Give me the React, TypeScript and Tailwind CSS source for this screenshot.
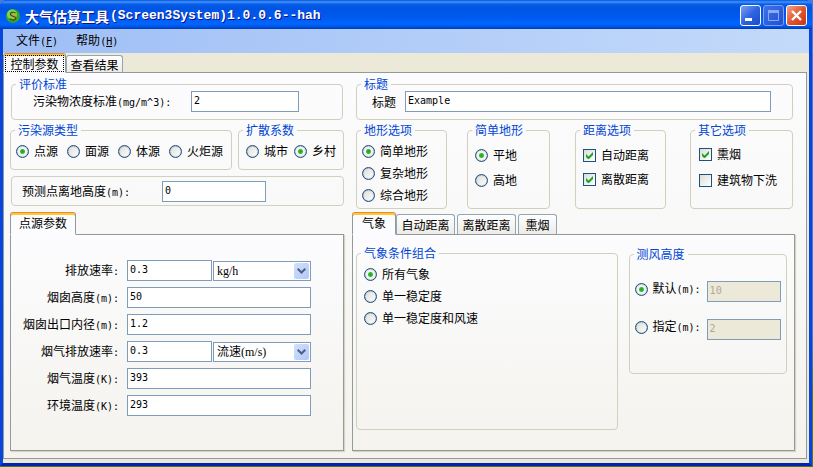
import React from 'react';
import clsx from 'clsx';

const LATIN = "font-['DejaVu_Sans_Mono','Noto_Sans_CJK_SC',monospace] text-[10px]";
const INPUT = clsx(
    LATIN,
    'block h-[21px] min-w-0 border border-[#7f9db9] bg-white px-0.5 pb-0.5 text-black outline-none disabled:bg-[#ece9d8] disabled:text-[#aca899]'
);

// Chinese at 12px, Latin runs at the half-width size
function Text({ children }: { children: string }) {
    return (
        <span className="whitespace-nowrap">
            {children.split(/([\x20-\x7e]+)/).map((part, i) =>
                i % 2 ? <span key={i} className={LATIN}>{part}</span> : part
            )}
        </span>
    );
}

function Group({ title, className, children }: { title: string; className?: string; children: React.ReactNode }) {
    return (
        <fieldset className={clsx('min-w-0 rounded-[4px] border border-[#d0d0bf]', className)}>
            <legend className="ml-1 px-[3px] leading-3 text-[#0046d5]">{title}</legend>
            {children}
        </fieldset>
    );
}

function Radio({ name, label, checked }: { name: string; label: string; checked?: boolean }) {
    return (
        <label className="flex h-4 items-center gap-[5px]">
            <input
                type="radio"
                name={name}
                defaultChecked={checked}
                className="size-[13px] shrink-0 appearance-none rounded-full border border-[#21507d] bg-linear-to-br from-[#dcdcd7] to-white shadow-[inset_0_0_1px_#21507d] checked:bg-[radial-gradient(circle,#21a121_0,#36bb34_2px,#f3f4f0_3px)]"
            />
            <Text>{label}</Text>
        </label>
    );
}

function Check({ label, checked }: { label: string; checked?: boolean }) {
    return (
        <label className="flex h-4 items-center gap-[5px]">
            <span className="grid shrink-0">
                <input
                    type="checkbox"
                    defaultChecked={checked}
                    className="peer col-start-1 row-start-1 size-[13px] appearance-none border border-[#1c5180] bg-linear-to-br from-[#dcdcd7] to-white"
                />
                <svg viewBox="0 0 13 13" className="pointer-events-none invisible col-start-1 row-start-1 size-[13px] peer-checked:visible">
                    <path d="M3 5v3l2 2h1l4-4V3L5.500 7.500z" fill="#21a121" />
                </svg>
            </span>
            <Text>{label}</Text>
        </label>
    );
}

function Combo({ label, options }: { label: string; options: string[] }) {
    return (
        <div className="relative">
            <select
                aria-label={label}
                className="block h-5 w-full appearance-none border border-[#7f9db9] bg-white pl-[3px] font-['Liberation_Serif','Noto_Sans_CJK_SC',serif] text-xs leading-4 text-black outline-none"
            >
                {options.map((o) => (
                    <option key={o}>{o}</option>
                ))}
            </select>
            <span className="pointer-events-none absolute top-0.5 right-0.5 flex h-4 w-[15px] items-center justify-center rounded-[2px] bg-linear-to-br from-[#d3e0fd] to-[#b0c8f7]">
                <svg viewBox="0 0 9 6" className="h-1.5 w-[9px]">
                    <path d="M.7.7l3.800 3.800L8.300.7" fill="none" stroke="#4d6185" strokeWidth="2" />
                </svg>
            </span>
        </div>
    );
}

function Tab({ label, selected, focused, className }: { label: string; selected?: boolean; focused?: boolean; className: string }) {
    return (
        <button
            type="button"
            role="tab"
            aria-selected={!!selected}
            className={clsx(
                'flex items-center justify-center rounded-t-[3px] border whitespace-nowrap',
                selected
                    ? 'z-10 -mb-px border-x-[#919b9c] border-t-[#e68b2c] border-b-transparent bg-[#fcfcfe] shadow-[inset_0_2px_#ffc73c]'
                    : 'border-b-0 border-[#91a7b4] bg-linear-to-b from-white to-[#ecebe6]',
                className
            )}
        >
            <span className={clsx('leading-[15px]', focused && 'border border-dotted border-black px-1')}>{label}</span>
        </button>
    );
}

const PANE = 'border border-[#919b9c] bg-linear-to-b from-[#fcfcfe] to-[#f4f3ee]';

const sourceFields = [
    { label: '排放速率:', value: '0.3', options: ['kg/h', 'g/s'] },
    { label: '烟囱高度(m):', value: '50' },
    { label: '烟囱出口内径(m):', value: '1.2' },
    { label: '烟气排放速率:', value: '0.3', options: ['流速(m/s)', '流量(m^3/h)'] },
    { label: '烟气温度(K):', value: '393' },
    { label: '环境温度(K):', value: '293' },
];

function TitleBar() {
    return (
        <header className="flex h-[29px] items-center rounded-t-[7px] bg-[linear-gradient(#0a52d8_0,#3d95ff_2px,#0a5fe8_4px,#0054e3_8px,#0058ee_16px,#0066ff_24px,#0052dd_27px,#0038b4_29px)] pt-0.5 pr-[5px] pl-1.5">
            <svg viewBox="0 0 14 14" className="mr-[5px] size-3.5">
                <circle cx="7" cy="7" r="7" fill="#35a32c" />
                <circle cx="6" cy="5.500" r="5" fill="#7fd44f" />
                <path d="M9.500 4C7 2.500 4 3.500 4.500 5.500S10 7 9.500 9.500 5 11 4 9.500" fill="none" stroke="#3a4a12" strokeWidth="1.200" />
                <path d="M5.500 5.500l4 1.500M6 9.500l3-.5" stroke="#f08a24" strokeWidth="1.200" />
            </svg>
            <h1 className="flex flex-1 items-center text-sm font-bold whitespace-nowrap text-white [text-shadow:1px_1px_#0f1089]">
                大气估算工具
                <span className="pt-0.5 pl-px font-['Liberation_Mono',monospace] text-[13px]">(Screen3System)1.0.0.6--hah</span>
            </h1>
            <div className="flex gap-0.5">
                <button type="button" aria-label="最小化" className="size-[21px] rounded-[3px] border border-white bg-linear-to-br from-[#7ba0f2] via-[#2f63e0] to-[#1a4bd0]">
                    <svg viewBox="0 0 19 19"><path d="M4 12h7v3H4z" fill="#fff" /></svg>
                </button>
                <button type="button" aria-label="最大化" disabled className="size-[21px] rounded-[3px] border border-[#7f9df0] bg-linear-to-br from-[#3f72e8] to-[#1d50d2]">
                    <svg viewBox="0 0 19 19"><path d="M4.500 5v9.500h10V5M4 5.500h11" fill="none" stroke="#8ea8ee" /><path d="M4 4h11v3H4z" fill="#8ea8ee" /></svg>
                </button>
                <button type="button" aria-label="关闭" className="size-[21px] rounded-[3px] border border-white bg-linear-to-br from-[#f0a189] via-[#e2562f] to-[#c9350f]">
                    <svg viewBox="0 0 19 19"><path d="M5 5l9 9M14 5l-9 9" stroke="#fff" strokeWidth="2.400" /></svg>
                </button>
            </div>
        </header>
    );
}

export default function App() {
    return (
        <div className="flex min-h-screen flex-col bg-linear-to-b from-[#4a7ade] from-70% to-[#4a7a10] to-85% pr-px pb-px font-['Noto_Sans_CJK_SC',sans-serif] text-xs leading-4 text-black">
            <div className="flex flex-1 flex-col rounded-t-[7px] bg-[#0038c8]">
                <TitleBar />
                <div className="flex flex-1 flex-col border-x-[3px] border-b-[3px] border-x-[#0845dc] border-b-[#0024b0] bg-[#ece9d8]">
                    <nav className="flex h-6 items-center gap-[18px] bg-linear-to-r from-[#9ebef5] to-[#c4dafa] pl-[13px]">
                        <button type="button"><Text>文件(</Text><u className={LATIN}>F</u><Text>)</Text></button>
                        <button type="button"><Text>帮助(</Text><u className={LATIN}>H</u><Text>)</Text></button>
                    </nav>

                    <div role="tablist" className="flex items-end">
                        <Tab label="控制参数" selected focused className="h-5 w-[63px]" />
                        <Tab label="查看结果" className="h-[17px] w-[57px]" />
                    </div>

                    <main className={clsx(PANE, 'mr-0.5 mb-1 grid flex-1 grid-cols-[334fr_443fr] gap-2 pt-[5px] pr-[11px] pb-[7px] pl-1.5')}>
                        <div className="flex min-w-0 flex-col">
                            <Group title="评价标准" className="mx-px">
                                <div className="flex items-center pt-px pr-[43px] pb-[7px] pl-[21px]">
                                    <label htmlFor="limit" className="w-[158px]"><Text>污染物浓度标准(mg/m^3):</Text></label>
                                    <input id="limit" defaultValue="2" className={clsx(INPUT, 'flex-1')} />
                                </div>
                            </Group>

                            <div className="mt-1 grid grid-cols-[222fr_106fr] gap-1.5">
                                <Group title="污染源类型">
                                    <div className="flex gap-[9px] pt-[7px] pb-2.5 pl-[5px]">
                                        <Radio name="source" label="点源" checked />
                                        <Radio name="source" label="面源" />
                                        <Radio name="source" label="体源" />
                                        <Radio name="source" label="火炬源" />
                                    </div>
                                </Group>
                                <Group title="扩散系数">
                                    <div className="flex gap-1.5 pt-[7px] pb-2.5 pl-[7px]">
                                        <Radio name="diffusion" label="城市" />
                                        <Radio name="diffusion" label="乡村" checked />
                                    </div>
                                </Group>
                            </div>

                            <div className="mt-1.5 ml-px flex items-center rounded-[4px] border border-[#d0d0bf] pt-1 pr-[77px] pb-[3px] pl-2.5">
                                <label htmlFor="receptor" className="w-[140px]"><Text>预测点离地高度(m):</Text></label>
                                <input id="receptor" defaultValue="0" className={clsx(INPUT, 'flex-1')} />
                            </div>

                            <div role="tablist" className="mt-1.5 flex items-end">
                                <Tab label="点源参数" selected className="h-[23px] w-[66px] pb-0.5" />
                            </div>
                            <div className={clsx(PANE, 'flex flex-1 flex-col gap-1.5 pt-[25px] pr-8 pb-[34px] shadow-[1px_1px_1px_#d8d4c0]')}>
                                {sourceFields.map((f) => (
                                    <div key={f.label} className="flex items-center gap-2">
                                        <label htmlFor={f.label} className="w-[108px] text-right"><Text>{f.label}</Text></label>
                                        <div className={clsx('grid min-w-0 flex-1 items-center gap-px', f.options && 'grid-cols-[85fr_98fr]')}>
                                            <input id={f.label} defaultValue={f.value} className={clsx(INPUT, 'w-full')} />
                                            {f.options && <Combo label={f.label} options={f.options} />}
                                        </div>
                                    </div>
                                ))}
                            </div>
                        </div>

                        <div className="flex min-w-0 flex-col">
                            <Group title="标题" className="mr-0.5 ml-1">
                                <div className="flex items-center gap-[9px] pt-px pr-[21px] pb-[7px] pl-[15px]">
                                    <label htmlFor="title">标题</label>
                                    <input id="title" defaultValue="Example" className={clsx(INPUT, 'flex-1')} />
                                </div>
                            </Group>

                            <div className="mt-1 mr-0.5 ml-1 grid grid-cols-[111fr_108fr_115fr_103fr]">
                                <Group title="地形选项" className="mr-5">
                                    <div className="flex flex-col gap-1.5 pt-[7px] pb-[5px] pl-[5px]">
                                        <Radio name="terrain" label="简单地形" checked />
                                        <Radio name="terrain" label="复杂地形" />
                                        <Radio name="terrain" label="综合地形" />
                                    </div>
                                </Group>
                                <Group title="简单地形" className="mr-[25px]">
                                    <div className="flex flex-col gap-[9px] pt-[11px] pl-[7px]">
                                        <Radio name="simple" label="平地" checked />
                                        <Radio name="simple" label="高地" />
                                    </div>
                                </Group>
                                <Group title="距离选项" className="mr-6">
                                    <div className="flex flex-col gap-2 pt-[11px] pl-[7px]">
                                        <Check label="自动距离" checked />
                                        <Check label="离散距离" checked />
                                    </div>
                                </Group>
                                <Group title="其它选项">
                                    <div className="flex flex-col gap-2.5 pt-2.5 pl-2">
                                        <Check label="熏烟" checked />
                                        <Check label="建筑物下洗" />
                                    </div>
                                </Group>
                            </div>

                            <div role="tablist" className="mt-[3px] flex items-end">
                                <Tab label="气象" selected className="h-[23px] w-11 pb-0.5" />
                                <Tab label="自动距离" className="h-5 w-[59px]" />
                                <Tab label="离散距离" className="ml-0.5 h-5 w-[59px]" />
                                <Tab label="熏烟" className="ml-0.5 h-5 w-[39px]" />
                            </div>
                            <div className={clsx(PANE, 'flex flex-1 items-stretch gap-[11px] pt-3 pr-[7px] pb-5 pl-[3px] shadow-[1px_1px_1px_#d8d4c0]')}>
                                <Group title="气象条件组合" className="flex-[262]">
                                    <div className="flex flex-col gap-1.5 pt-[7px] pl-[7px]">
                                        <Radio name="weather" label="所有气象" checked />
                                        <Radio name="weather" label="单一稳定度" />
                                        <Radio name="weather" label="单一稳定度和风速" />
                                    </div>
                                </Group>
                                <Group title="测风高度" className="mt-px flex-[158] self-start">
                                    <div className="flex flex-col gap-[17px] pt-[21px] pr-[5px] pb-[33px] pl-[5px]">
                                        <div className="flex gap-1.5">
                                            <Radio name="anemometer" label="默认(m):" checked />
                                            <input aria-label="默认(m)" disabled defaultValue="10" className={clsx(INPUT, 'w-0 flex-1')} />
                                        </div>
                                        <div className="flex gap-1.5">
                                            <Radio name="anemometer" label="指定(m):" />
                                            <input aria-label="指定(m)" disabled defaultValue="2" className={clsx(INPUT, 'w-0 flex-1')} />
                                        </div>
                                    </div>
                                </Group>
                            </div>
                        </div>
                    </main>
                </div>
            </div>
        </div>
    );
}
